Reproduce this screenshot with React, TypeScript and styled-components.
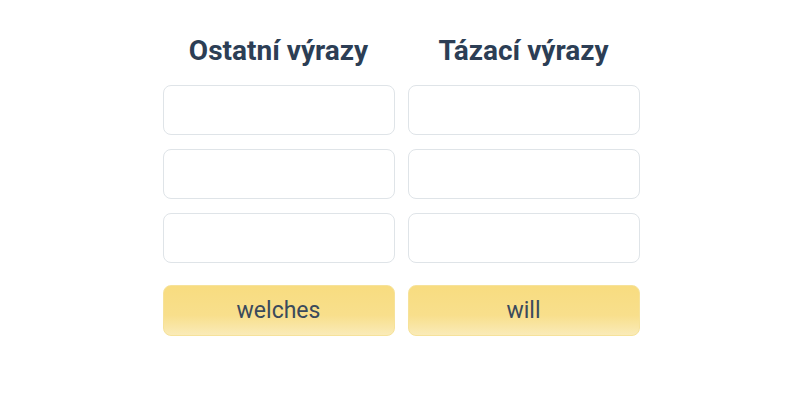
import styled, { createGlobalStyle } from 'styled-components';

const GlobalStyle = createGlobalStyle`
  body {
    margin: 0;
    background: #ffffff;
    font-family: Roboto, "Noto Sans", sans-serif;
  }
`;

const Board = styled.section`
  display: grid;
  grid-template-columns: 232px 232px;
  column-gap: 13px;
  width: 477px;
  margin: 0 auto;
  padding-top: 34px;
  transform: translateX(1px);
`;

const Column = styled.div`
  display: flex;
  flex-direction: column;
`;

const Heading = styled.h2`
  margin: 0 0 17px;
  font-size: 28px;
  line-height: 34px;
  font-weight: 700;
  color: #2c3e55;
  text-align: center;
`;

const Slot = styled.div`
  box-sizing: border-box;
  height: 50px;
  margin-bottom: 14px;
  border: 1px solid #dfe4e8;
  border-radius: 8px;
  background: #ffffff;
`;

const Word = styled.button`
  box-sizing: border-box;
  height: 51px;
  margin-top: 8px;
  border: 1px solid #f6e29a;
  border-radius: 8px;
  background: linear-gradient(to bottom, #f8dc80 0%, #f8df8c 60%, #faebb8 100%);
  font-family: Roboto, "Noto Sans", sans-serif;
  font-size: 23px;
  color: #3a4a5c;
  cursor: pointer;
`;

const columns = [
  { title: 'Ostatní výrazy', word: 'welches' },
  { title: 'Tázací výrazy', word: 'will' },
];

export default function App() {
  return (
    <>
      <GlobalStyle />
      <Board>
        {columns.map((col) => (
          <Column key={col.title}>
            <Heading>{col.title}</Heading>
            <Slot />
            <Slot />
            <Slot />
            <Word>{col.word}</Word>
          </Column>
        ))}
      </Board>
    </>
  );
}
